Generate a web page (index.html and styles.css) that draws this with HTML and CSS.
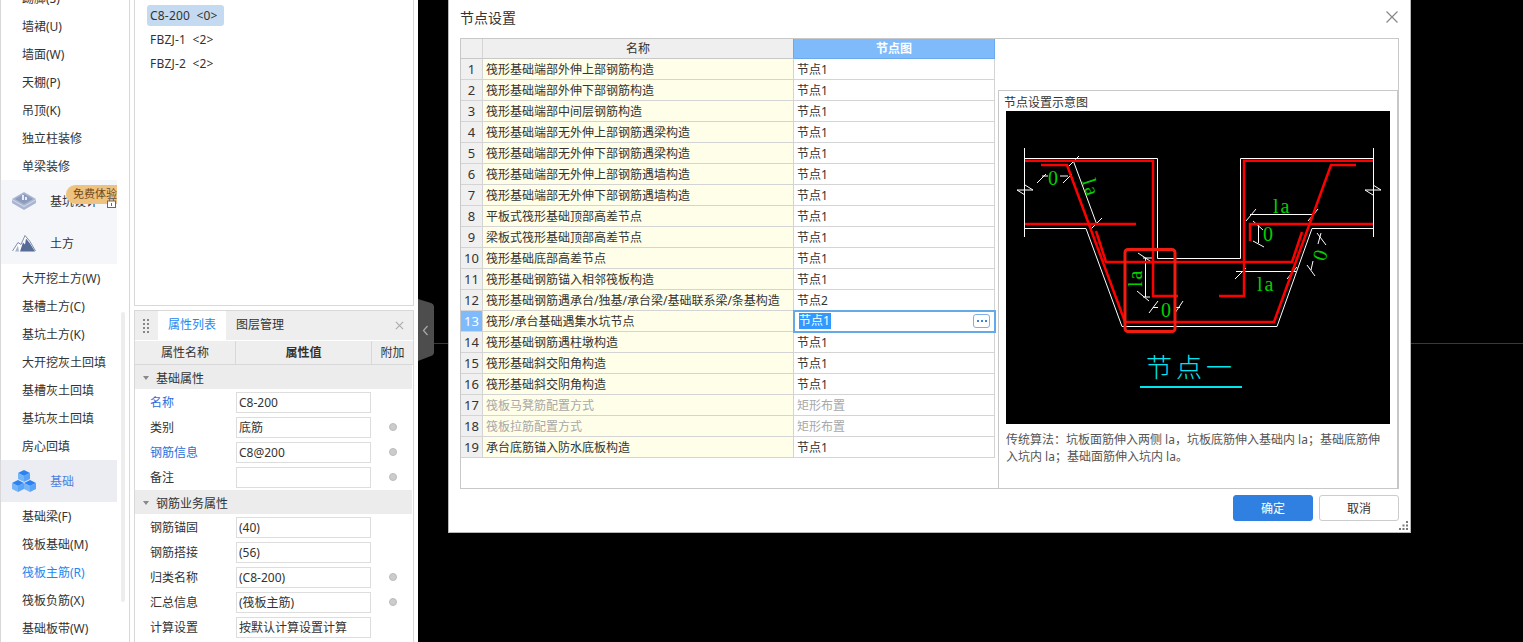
FILE: index.html
```html
<!DOCTYPE html>
<html lang="zh">
<head>
<meta charset="utf-8">
<title>节点设置</title>
<link rel="stylesheet" href="styles.css">
</head>
<body>
<div class="app">
  <nav class="nav">
    <div class="nav-list">
      <div class="nav-item">踢脚(S)</div>
      <div class="nav-item">墙裙(U)</div>
      <div class="nav-item">墙面(W)</div>
      <div class="nav-item">天棚(P)</div>
      <div class="nav-item">吊顶(K)</div>
      <div class="nav-item">独立柱装修</div>
      <div class="nav-item">单梁装修</div>
      <div class="nav-group-wrap">
        <div class="nav-group">
          <svg class="nav-icon" viewBox="0 0 24 18"><path d="M12 0L24 7V11L12 18L0 11V7Z" fill="#a9b5d2"/><path d="M12 2L21 7L12 12L3 7Z" fill="#8c9abb"/><path d="M10 3h2v5h-2zM13 5h2v3h-2z" fill="#e8ecf4"/><path d="M0 7L12 14L24 7V8L12 15L0 8Z" fill="#d5dbe9"/></svg>
          <span>基坑设计</span>
          <svg class="lock" viewBox="0 0 9 10"><path d="M2.500 3V2a2 2 0 0 1 4 0v1" fill="none" stroke="#667" /><rect x=".5" y="3" width="8" height="6.500" fill="#fff" stroke="#667"/><rect x="4" y="5" width="1" height="3" fill="#667"/></svg>
        </div>
        <div class="nav-group">
          <svg class="nav-icon" viewBox="0 0 24 17"><path d="M.5 16.500L6 8L9 10L13 1L18 7L23.500 16.500" fill="#fff" stroke="#7d8cab" stroke-width="1"/><path d="M8 17L11 8L13 10L14 4L18 9L23 17Z" fill="#566b96"/><path d="M3 17L6 11L7 17Z" fill="#a9b5cc"/></svg>
          <span>土方</span>
        </div>
        <div class="badge">免费体验</div>
      </div>
      <div class="nav-item">大开挖土方(W)</div>
      <div class="nav-item">基槽土方(C)</div>
      <div class="nav-item">基坑土方(K)</div>
      <div class="nav-item">大开挖灰土回填</div>
      <div class="nav-item">基槽灰土回填</div>
      <div class="nav-item">基坑灰土回填</div>
      <div class="nav-item">房心回填</div>
      <div class="nav-group nav-group-active">
        <svg class="nav-icon-cubes" viewBox="0 0 24 23">
          <path d="M12 0L18 3L12 6L6 3Z" fill="#2b82f2"/><path d="M6 3L12 6V12L6 9Z" fill="#76b4f8"/><path d="M18 3L12 6V12L18 9Z" fill="#5aa3f6"/>
          <path d="M6 10L12 13L6 16L0 13Z" fill="#2b82f2"/><path d="M0 13L6 16V22L0 19Z" fill="#76b4f8"/><path d="M12 13L6 16V22L12 19Z" fill="#5aa3f6"/>
          <path d="M18 10L24 13L18 16L12 13Z" fill="#2b82f2"/><path d="M12 13L18 16V22L12 19Z" fill="#76b4f8"/><path d="M24 13L18 16V22L24 19Z" fill="#5aa3f6"/>
        </svg>
        <span>基础</span>
      </div>
      <div class="nav-item">基础梁(F)</div>
      <div class="nav-item">筏板基础(M)</div>
      <div class="nav-item nav-item-current">筏板主筋(R)</div>
      <div class="nav-item">筏板负筋(X)</div>
      <div class="nav-item">基础板带(W)</div>
    </div>
    <div class="nav-scroll"></div>
  </nav>

  <section class="side">
    <div class="list-box">
      <div class="list-item list-item-selected">C8-200 &lt;0&gt;</div>
      <div class="list-item">FBZJ-1 &lt;2&gt;</div>
      <div class="list-item">FBZJ-2 &lt;2&gt;</div>
    </div>
    <div class="props">
      <div class="props-tabs">
        <svg class="grip" viewBox="0 0 6 14"><path d="M0 0h2v2H0zM4 0h2v2H4zM0 4h2v2H0zM4 4h2v2H4zM0 8h2v2H0zM4 8h2v2H4zM0 12h2v2H0zM4 12h2v2H4z" fill="#888"/></svg>
        <div class="tab tab-active">属性列表</div>
        <div class="tab">图层管理</div>
        <svg class="props-close" viewBox="0 0 10 10"><path d="M1 1L9 9M9 1L1 9" stroke="#aaa" stroke-width="1.2"/></svg>
      </div>
      <div class="props-head">
        <div class="ph ph-name">属性名称</div>
        <div class="ph ph-value">属性值</div>
        <div class="ph ph-extra">附加</div>
      </div>
      <div class="prop-group"><i class="tri"></i>基础属性</div>
      <div class="prop-row"><div class="prop-name prop-link">名称</div><div class="prop-input">C8-200</div><div class="prop-extra"></div></div>
      <div class="prop-row"><div class="prop-name">类别</div><div class="prop-input">底筋</div><div class="prop-extra"><i class="dot"></i></div></div>
      <div class="prop-row"><div class="prop-name prop-link">钢筋信息</div><div class="prop-input">C8@200</div><div class="prop-extra"><i class="dot"></i></div></div>
      <div class="prop-row"><div class="prop-name">备注</div><div class="prop-input"></div><div class="prop-extra"><i class="dot"></i></div></div>
      <div class="prop-group prop-group-next"><i class="tri"></i>钢筋业务属性</div>
      <div class="prop-row"><div class="prop-name">钢筋锚固</div><div class="prop-input">(40)</div><div class="prop-extra"></div></div>
      <div class="prop-row"><div class="prop-name">钢筋搭接</div><div class="prop-input">(56)</div><div class="prop-extra"></div></div>
      <div class="prop-row"><div class="prop-name">归类名称</div><div class="prop-input">(C8-200)</div><div class="prop-extra"><i class="dot"></i></div></div>
      <div class="prop-row"><div class="prop-name">汇总信息</div><div class="prop-input">(筏板主筋)</div><div class="prop-extra"><i class="dot"></i></div></div>
      <div class="prop-row"><div class="prop-name">计算设置</div><div class="prop-input">按默认计算设置计算</div><div class="prop-extra"></div></div>
    </div>
  </section>

  <main class="canvas">
    <div class="axis-line"></div>
    <svg class="handle" viewBox="0 0 16 62"><path d="M0 0L13 4Q16 5 16 8V53Q16 56 13 57L0 62Z" fill="#4d4d4d"/><path d="M9.500 27L5.500 31.500L9.500 36" fill="none" stroke="#aaa" stroke-width="1.2"/></svg>

    <div class="dialog">
      <header class="dialog-title">
        <span>节点设置</span>
        <svg class="dialog-close" viewBox="0 0 12 12"><path d="M.5 .5L11.500 11.500M11.500 .5L.5 11.500" stroke="#888" stroke-width="1.2"/></svg>
      </header>
      <div class="dialog-box">
        <table class="grid">
          <thead>
            <tr><th class="c-num"></th><th class="c-name">名称</th><th class="c-node">节点图</th></tr>
          </thead>
          <tbody>
            <tr><td class="c-num">1</td><td class="c-name">筏形基础端部外伸上部钢筋构造</td><td class="c-node">节点1</td></tr>
            <tr><td class="c-num">2</td><td class="c-name">筏形基础端部外伸下部钢筋构造</td><td class="c-node">节点1</td></tr>
            <tr><td class="c-num">3</td><td class="c-name">筏形基础端部中间层钢筋构造</td><td class="c-node">节点1</td></tr>
            <tr><td class="c-num">4</td><td class="c-name">筏形基础端部无外伸上部钢筋遇梁构造</td><td class="c-node">节点1</td></tr>
            <tr><td class="c-num">5</td><td class="c-name">筏形基础端部无外伸下部钢筋遇梁构造</td><td class="c-node">节点1</td></tr>
            <tr><td class="c-num">6</td><td class="c-name">筏形基础端部无外伸上部钢筋遇墙构造</td><td class="c-node">节点1</td></tr>
            <tr><td class="c-num">7</td><td class="c-name">筏形基础端部无外伸下部钢筋遇墙构造</td><td class="c-node">节点1</td></tr>
            <tr><td class="c-num">8</td><td class="c-name">平板式筏形基础顶部高差节点</td><td class="c-node">节点1</td></tr>
            <tr><td class="c-num">9</td><td class="c-name">梁板式筏形基础顶部高差节点</td><td class="c-node">节点1</td></tr>
            <tr><td class="c-num">10</td><td class="c-name">筏形基础底部高差节点</td><td class="c-node">节点1</td></tr>
            <tr><td class="c-num">11</td><td class="c-name">筏形基础钢筋锚入相邻筏板构造</td><td class="c-node">节点1</td></tr>
            <tr><td class="c-num">12</td><td class="c-name">筏形基础钢筋遇承台/独基/承台梁/基础联系梁/条基构造</td><td class="c-node">节点2</td></tr>
            <tr><td class="c-num c-num-active">13</td><td class="c-name">筏形/承台基础遇集水坑节点</td><td class="c-node c-editing"><div class="edit-cell"><span class="edit-sel">节点1</span><span class="more"><i></i><i></i><i></i></span></div></td></tr>
            <tr><td class="c-num">14</td><td class="c-name">筏形基础钢筋遇柱墩构造</td><td class="c-node">节点1</td></tr>
            <tr><td class="c-num">15</td><td class="c-name">筏形基础斜交阳角构造</td><td class="c-node">节点1</td></tr>
            <tr><td class="c-num">16</td><td class="c-name">筏形基础斜交阴角构造</td><td class="c-node">节点1</td></tr>
            <tr class="row-off"><td class="c-num">17</td><td class="c-name">筏板马凳筋配置方式</td><td class="c-node">矩形布置</td></tr>
            <tr class="row-off"><td class="c-num">18</td><td class="c-name">筏板拉筋配置方式</td><td class="c-node">矩形布置</td></tr>
            <tr><td class="c-num">19</td><td class="c-name">承台底筋锚入防水底板构造</td><td class="c-node">节点1</td></tr>
          </tbody>
        </table>
        <aside class="preview">
          <div class="preview-title">节点设置示意图</div>
          <svg class="drawing" viewBox="1006 111 384 313">
            <rect x="1006" y="111" width="384" height="313" fill="#000"/>
            <g class="cad-white">
              <path d="M1024.500 148V237M1373.500 148V237"/>
              <path d="M1024.500 158.500H1157.500V258.500H1240.500V158.500H1373.500"/>
              <path d="M1025 228.500H1086L1122 326.500H1277L1312 228.500H1373"/>
              <path d="M1073 160L1097 225M1069 166L1079 156M1091 229L1102 218"/>
              <path d="M1017 190H1033L1025 185M1017 190L1025 195M1365 190H1381L1373 185M1365 190L1373 195"/>
              <path d="M1042 176H1048M1060 176H1068M1037 183L1046 174M1063 183L1072 174"/>
              <path d="M1250 214.500H1314M1246 221L1256 209M1308 221L1318 209"/>
              <path d="M1258.500 223V243M1253 221L1263 230M1253 241L1264 247"/>
              <path d="M1321 233L1318 244M1313 261L1311 270M1317 233L1326 245M1307 265L1315 276"/>
              <path d="M1236 271.500H1296M1235 279L1246 268M1287 279L1297 267"/>
              <path d="M1145.500 258V297M1138 253L1153 263M1143 258H1153M1137 291L1149 301M1143 297H1150"/>
              <path d="M1153 307.500H1158M1175 307.500H1180M1149 313L1158 301M1175 313L1183 301"/>
            </g>
            <g class="cad-red">
              <path d="M1025 160.700H1153V296H1178"/>
              <path d="M1041 165H1067L1125 322H1274L1331 165H1356"/>
              <path d="M1025 224H1136"/>
              <path d="M1096 231L1106 262H1292L1302 232"/>
              <path d="M1373 160.700H1244V296H1219"/>
              <path d="M1250 241V224H1373"/>
            </g>
            <rect class="cad-box" x="1125" y="249.500" width="50" height="82" rx="3"/>
            <g class="cad-text">
              <text x="1048" y="185">0</text>
              <text x="1263" y="241">0</text>
              <text x="1161" y="317">0</text>
              <text x="1273" y="213">la</text>
              <text x="1257" y="291">la</text>
              <text transform="translate(1082 181) rotate(72)">la</text>
              <text transform="translate(1142 287) rotate(-90)">la</text>
              <text transform="translate(1325 262) rotate(-72)">0</text>
            </g>
            <text class="cad-title" x="1146" y="377">节点一</text>
            <rect x="1140" y="386" width="102" height="2" fill="#00e5ee"/>
          </svg>
          <p class="preview-desc">传统算法：坑板面筋伸入两侧 la，坑板底筋伸入基础内 la；基础底筋伸入坑内 la；基础面筋伸入坑内 la。</p>
        </aside>
      </div>
      <footer class="dialog-foot">
        <button class="btn btn-primary">确定</button>
        <button class="btn">取消</button>
      </footer>
      <svg class="resize" viewBox="0 0 9 9"><path d="M7 0h2v2H7zM3.500 3.500h2v2h-2zM7 3.500h2v2H7zM0 7h2v2H0zM3.500 7h2v2h-2zM7 7h2v2H7z" fill="#777"/></svg>
    </div>
  </main>
</div>
</body>
</html>
```

FILE: styles.css
```css
* { box-sizing: border-box; }
html, body { margin: 0; height: 100%; overflow: hidden; }
body {
  font-family: "Noto Sans", "Noto Sans CJK SC", sans-serif;
  font-size: 12px;
  color: #333;
  background: #fff;
}
.app { display: flex; width: 1523px; height: 642px; overflow: hidden; }

/* left navigation */
.nav {
  position: relative;
  width: 130px;
  flex: none;
  border-left: 1px solid #d8d8d8;
  border-right: 1px solid #d8d8d8;
  overflow: hidden;
}
.nav-list { width: 116px; margin-top: -16px; }
.nav-item { height: 28px; line-height: 30px; padding-left: 21px; white-space: nowrap; }
.nav-item-current { color: #1e88f0; }
.nav-group-wrap { position: relative; background: #f4f6f9; margin: 0; }
.nav-group {
  display: flex;
  align-items: center;
  height: 42px;
  padding-left: 11px;
  position: relative;
}
.nav-group span { margin-left: 14px; white-space: nowrap; }
.nav-group-active { background: #ecedf2; height: 42px; }
.nav-group-active span { color: #4d7fe0; }
.nav-icon { width: 24px; height: 18px; flex: none; }
.nav-icon-cubes { width: 24px; height: 23px; flex: none; }
.lock { position: absolute; left: 106px; top: 18px; width: 9px; height: 10px; z-index: 2; }
.badge {
  position: absolute;
  left: 65px;
  top: 5px;
  width: 51px;
  height: 19px;
  line-height: 18px;
  padding-left: 7px;
  font-size: 11px;
  background: #eec27f;
  border-radius: 10px 0 0 10px;
  color: #6f4a1c;
  white-space: nowrap;
  z-index: 1;
}
.nav-scroll {
  position: absolute;
  left: 120px;
  top: 312px;
  width: 4px;
  height: 290px;
  background: #ededed;
  border-radius: 2px;
}

/* middle column */
.side {
  width: 280px;
  margin-left: 4px;
  flex: none;
  display: flex;
  flex-direction: column;
  gap: 4px;
}
.list-box {
  height: 306px;
  flex: none;
  border: 1px solid #d8d8d8;
  border-top: 0;
  padding: 5px 0 0 12px;
}
.list-item {
  height: 21px;
  line-height: 21px;
  width: 77px;
  padding-left: 3px;
  margin-bottom: 3px;
  letter-spacing: .2px;
  word-spacing: 3px;
  white-space: nowrap;
}
.list-item-selected { background: #c3daf1; border-radius: 3px; }

.props { flex: 1; border: 1px solid #d8d8d8; border-bottom: 0; overflow: hidden; }
.props-tabs { display: flex; align-items: stretch; height: 29px; background: #eee; position: relative; }
.grip { width: 6px; height: 14px; margin: 8px 9px 0 8px; flex: none; }
.tab { width: 68px; line-height: 28px; text-align: center; margin-right: 0; }
.tab-active { background: #fff; color: #1e88f0; }
.tab + .tab { width: auto; margin-left: 10px; }
.props-close { position: absolute; right: 9px; top: 10px; width: 9px; height: 9px; }
.props-head {
  display: flex;
  height: 24px;
  margin-top: 1px;
  background: #eee;
  border-bottom: 1px solid #d8d8d8;
  line-height: 24px;
  text-align: center;
}
.ph { border-right: 1px solid #d8d8d8; }
.ph-name { width: 101px; }
.ph-value { width: 136px; font-weight: 700; }
.ph-extra { width: 41px; border-right: 0; }
.prop-group {
  display: flex;
  align-items: center;
  height: 24px;
  margin-right: 1px;
  background: #ececec;
  padding: 1px 0 0 8px;
}
.prop-group-next { margin-top: 1px; }
.tri {
  width: 0;
  height: 0;
  border-left: 3px solid transparent;
  border-right: 3px solid transparent;
  border-top: 4px solid #888;
  margin-right: 7px;
}
.prop-row { display: flex; height: 25px; padding-top: 3px; }
.prop-name { width: 101px; padding-left: 15px; line-height: 22px; }
.prop-link { color: #2a6fdc; }
.prop-input {
  width: 135px;
  height: 21px;
  border: 1px solid #ddd;
  padding-left: 2px;
  line-height: 19px;
  white-space: nowrap;
  overflow: hidden;
}
.prop-extra { flex: 1; display: flex; justify-content: center; padding: 6px 0 0 0; }
.dot {
  display: block;
  width: 8px;
  height: 8px;
  margin-left: 1px;
  border-radius: 50%;
  background: #ccc;
  border: 1px solid #bbb;
}

/* canvas and dialog */
.canvas { position: relative; flex: 1; margin-left: 4px; background: #000; }
.axis-line { position: absolute; left: 0; right: 0; top: 343px; height: 1px; background: #c00000; }
.handle { position: absolute; left: 0; top: 299px; width: 16px; height: 62px; }
.dialog {
  position: absolute;
  left: 30px;
  top: 0;
  width: 963px;
  height: 533px;
  background: #fff;
  border: 1px solid #b8b8b8;
  border-top: 0;
  padding: 0 11px;
}
.dialog-title {
  height: 38px;
  display: flex;
  align-items: center;
  justify-content: space-between;
  font-size: 14px;
  padding-right: 1px;
  color: #333;
}
.dialog-title span { line-height: 34px; height: 36px; }
.dialog-close { width: 12px; height: 12px; margin: 0 0 4px 0; }
.dialog-box {
  display: flex;
  width: 939px;
  height: 451px;
  border: 1px solid #c8c8c8;
}
.grid {
  table-layout: fixed;
  width: 534px;
  flex: none;
  height: 419px;
  border-collapse: separate;
  border-spacing: 0;
  align-self: flex-start;
}
.grid th, .grid td {
  padding: 0 3px;
  border-right: 1px solid #d4d4d4;
  border-bottom: 1px solid #d4d4d4;
  font-weight: 400;
  line-height: 19px;
  white-space: nowrap;
  overflow: visible;
}
.grid th { height: 20px; background: #efefef; text-align: center; border-bottom-color: #c8c8c8; }
.grid td { height: 21px; }
.grid .c-num { width: 22px; padding: 0; text-align: center; background: #f0f0f0; font-size: 13px; }
.grid .c-name { width: 311px; }
.grid .c-node { width: 201px; }
.grid td.c-name { background: #fffee8; }
.grid td.c-node { background: #fff; }
.grid td.c-num-active { background: #7fbbfb; color: #fff; }
.grid th.c-name { border-right-color: #6aa9ee; }
.grid th.c-node {
  background: #7fbbfb;
  color: #fff;
  font-weight: 700;
  border-right-color: #6aa9ee;
  border-bottom-color: #6aa9ee;
}
.row-off td.c-name, .row-off td.c-node { color: #a8a8a8; }
.grid td.c-editing {
  padding: 0 3px 0 5px;
  outline: 2px solid #66a9e8;
  outline-offset: -1px;
  position: relative;
}
.edit-cell { display: flex; align-items: center; justify-content: space-between; height: 20px; }
.edit-sel { background: #3399ff; color: #fff; height: 16px; line-height: 16px; padding-right: 1px; }
.more {
  display: flex;
  align-items: center;
  justify-content: center;
  gap: 2px;
  width: 17px;
  height: 14px;
  margin-right: 1px;
  border: 1px solid #7fb1e6;
  border-radius: 3px;
  background: #fff;
}
.more i { width: 2px; height: 2px; background: #3d86d8; }

.preview {
  flex: 1;
  margin: 51px 0 0 3px;
  border: 1px solid #c8c8c8;
  border-bottom: 0;
  padding-left: 7px;
}
.preview-title { height: 20px; margin-left: -2px; line-height: 23px; color: #333; }
.drawing { display: block; width: 384px; height: 313px; }
.preview-desc {
  margin: 7px 0 0;
  width: 384px;
  line-height: 17px;
  color: #555;
}
.cad-white path { fill: none; stroke: #fff; stroke-width: 1; }
.cad-red path { fill: none; stroke: #f00; stroke-width: 2.5; }
.cad-box { fill: none; stroke: #f01c10; stroke-width: 3; }
.cad-text text {
  font-family: "Liberation Serif", serif;
  font-size: 20px;
  letter-spacing: 2px;
  fill: #00d000;
}
.cad-title {
  font-family: "Noto Sans CJK SC", sans-serif;
  font-size: 26px;
  font-weight: 300;
  letter-spacing: 4px;
  fill: #00e5ee;
}
.dialog-foot { display: flex; justify-content: flex-end; gap: 6px; margin-top: 6px; width: 939px; }
.btn {
  width: 80px;
  height: 26px;
  padding: 0;
  border: 1px solid #ccc;
  border-radius: 3px;
  background: #fff;
  color: #333;
  font: inherit;
}
.btn-primary { background: #2f80e0; border-color: #2f80e0; color: #fff; }
.resize { position: absolute; right: 2px; bottom: 2px; width: 9px; height: 9px; }
```
